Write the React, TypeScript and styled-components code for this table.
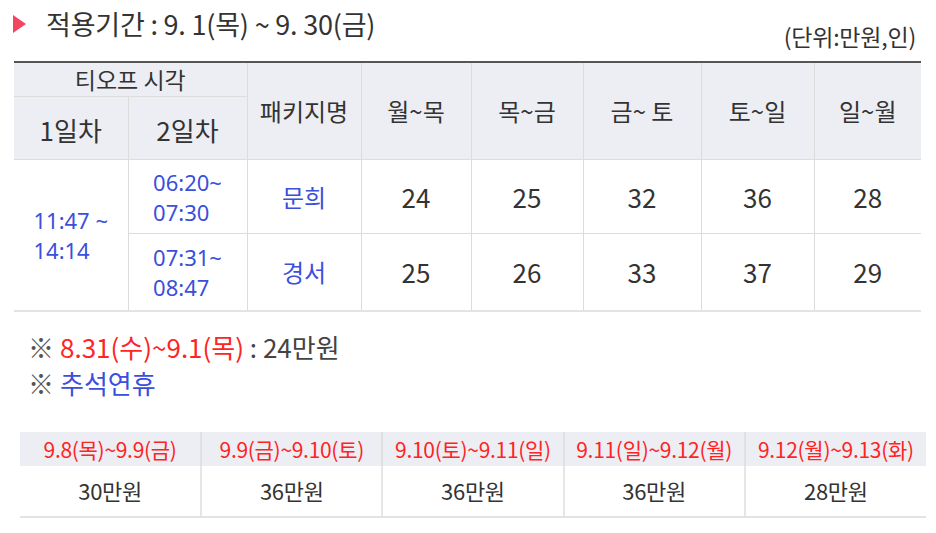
import styled, { createGlobalStyle } from 'styled-components'

const GlobalStyle = createGlobalStyle`
  html, body {
    margin: 0;
    padding: 0;
    background: #fff;
  }
  body {
    font-family: "Noto Sans CJK KR", "Noto Sans", sans-serif;
    color: #333;
  }
`

const RED = '#ff2323'
const BLUE = '#3a4fdc'
const HEAD_BG = '#eceef4'
const LINE = '#dcdcdc'

const Page = styled.div`
  width: 936px;
  padding: 0 0 0 13px;
  box-sizing: border-box;
`

const TitleRow = styled.div`
  display: flex;
  justify-content: space-between;
  align-items: flex-start;
  width: 903px;
  height: 61px;
`

const Title = styled.h2`
  display: flex;
  align-items: center;
  gap: 20px;
  margin: 8px 0 0;
  font-size: 27px;
  line-height: 32px;
  font-weight: 400;
  color: #333;
  letter-spacing: -0.2px;
`

const Arrow = styled.span`
  width: 0;
  height: 0;
  border-top: 9px solid transparent;
  border-bottom: 9px solid transparent;
  border-left: 13px solid #f2455f;
`

const Unit = styled.span`
  margin-top: 23px;
  font-size: 23px;
  line-height: 27px;
  color: #333;
  letter-spacing: -0.2px;
`

const Table = styled.table<{ $width: number }>`
  width: ${p => p.$width}px;
  border-collapse: collapse;
  table-layout: fixed;
  line-height: 1.15;
`

const TopTable = styled(Table)`
  margin-left: 1px;
  border-top: 2px solid #555;
  border-bottom: 2px solid #e3e3e3;
`

const Th = styled.th<{ $h?: number; $size?: number }>`
  background: ${HEAD_BG};
  font-weight: 400;
  font-size: ${p => p.$size ?? 24}px;
  color: #333;
  height: ${p => p.$h ?? 33}px;
  padding: 0;
  border-left: 1px solid ${LINE};
  border-right: 1px solid ${LINE};
  &:first-child {
    border-left: none;
  }
  &:last-child {
    border-right: none;
  }
`

const SubTh = styled(Th)`
  border-top: 1px solid ${LINE};
  font-size: 26px;
  padding-top: 3px;
`

const Td = styled.td<{ $h?: number; $color?: string; $size?: number }>`
  height: ${p => p.$h ?? 73}px;
  padding: 0;
  text-align: center;
  font-size: ${p => p.$size ?? 26}px;
  color: ${p => p.$color ?? '#333'};
  border: 1px solid ${LINE};
  &:first-child {
    border-left: none;
  }
  &:last-child {
    border-right: none;
  }
`

const TimeBlock = styled.span`
  display: inline-block;
  text-align: left;
  font-family: "Noto Sans", sans-serif;
  font-size: 22px;
  line-height: 30px;
  color: ${BLUE};
`

const Notes = styled.div`
  margin: 17px 0 0 15px;
  font-size: 26px;
  line-height: 36px;
  color: #444;
`

const Note = styled.p`
  margin: 0;
`

const Mark = styled.span`
  color: #555;
  margin-right: 6px;
`

const Em = styled.span<{ $color: string }>`
  color: ${p => p.$color};
`

const HolidayWrap = styled.div`
  margin: 31px 0 0 7px;
`

const HolidayTh = styled(Th)`
  color: ${RED};
  font-size: 21px;
  height: 34px;
  letter-spacing: -0.3px;
  border-left: 2px solid #e0e0e0;
  border-right: 2px solid #e0e0e0;
`

const HolidayTd = styled.td`
  height: 50px;
  padding: 0;
  text-align: center;
  font-size: 22px;
  color: #333;
  letter-spacing: -0.3px;
  border-left: 2px solid #e6e6e6;
  border-right: 2px solid #e6e6e6;
  border-bottom: 2px solid #e3e3e3;
  &:first-child {
    border-left: none;
  }
  &:last-child {
    border-right: none;
  }
`

const days = ['월~목', '목~금', '금~ 토', '토~일', '일~월']
const colWidths = [114, 119, 114, 110, 112, 118, 113, 107]

const rows = [
  { time: ['06:20~', '07:30'], name: '문희', prices: [24, 25, 32, 36, 28] },
  { time: ['07:31~', '08:47'], name: '경서', prices: [25, 26, 33, 37, 29] },
]

const holidays = [
  { range: '9.8(목)~9.9(금)', price: '30만원' },
  { range: '9.9(금)~9.10(토)', price: '36만원' },
  { range: '9.10(토)~9.11(일)', price: '36만원' },
  { range: '9.11(일)~9.12(월)', price: '36만원' },
  { range: '9.12(월)~9.13(화)', price: '28만원' },
]

export default function App() {
  return (
    <Page>
      <GlobalStyle />
      <TitleRow>
        <Title>
          <Arrow />
          적용기간 : 9. 1(목) ~ 9. 30(금)
        </Title>
        <Unit>(단위:만원,인)</Unit>
      </TitleRow>

      <TopTable $width={907}>
        <colgroup>
          {colWidths.map((w, i) => (
            <col key={i} style={{ width: w }} />
          ))}
        </colgroup>
        <thead>
          <tr>
            <Th colSpan={2} $h={33} $size={23}>
              티오프 시각
            </Th>
            <Th rowSpan={2}>패키지명</Th>
            {days.map(d => (
              <Th key={d} rowSpan={2}>
                {d}
              </Th>
            ))}
          </tr>
          <tr>
            <SubTh $h={59}>1일차</SubTh>
            <SubTh $h={59}>2일차</SubTh>
          </tr>
        </thead>
        <tbody>
          {rows.map((r, i) => (
            <tr key={r.name}>
              {i === 0 && (
                <Td rowSpan={2}>
                  <TimeBlock>
                    11:47 ~
                    <br />
                    14:14
                  </TimeBlock>
                </Td>
              )}
              <Td $h={i === 0 ? 73 : 76}>
                <TimeBlock>
                  {r.time[0]}
                  <br />
                  {r.time[1]}
                </TimeBlock>
              </Td>
              <Td $color={BLUE} $size={24}>
                {r.name}
              </Td>
              {r.prices.map((p, j) => (
                <Td key={j}>{p}</Td>
              ))}
            </tr>
          ))}
        </tbody>
      </TopTable>

      <Notes>
        <Note>
          <Mark>※</Mark>
          <Em $color={RED}>8.31(수)~9.1(목)</Em> : 24만원
        </Note>
        <Note>
          <Mark>※</Mark>
          <Em $color={BLUE}>추석연휴</Em>
        </Note>
      </Notes>

      <HolidayWrap>
        <Table $width={906}>
          <thead>
            <tr>
              {holidays.map(h => (
                <HolidayTh key={h.range}>{h.range}</HolidayTh>
              ))}
            </tr>
          </thead>
          <tbody>
            <tr>
              {holidays.map(h => (
                <HolidayTd key={h.range}>{h.price}</HolidayTd>
              ))}
            </tr>
          </tbody>
        </Table>
      </HolidayWrap>
    </Page>
  )
}
